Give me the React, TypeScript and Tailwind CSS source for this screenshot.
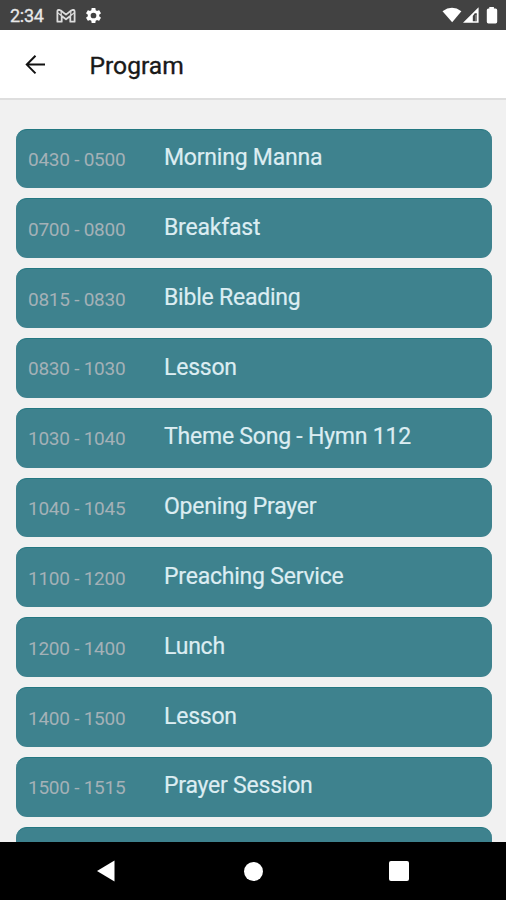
import React from "react";

type Item = { time: string; title: string };

const items: Item[] = [
  { time: "0430 - 0500", title: "Morning Manna" },
  { time: "0700 - 0800", title: "Breakfast" },
  { time: "0815 - 0830", title: "Bible Reading" },
  { time: "0830 - 1030", title: "Lesson" },
  { time: "1030 - 1040", title: "Theme Song - Hymn 112" },
  { time: "1040 - 1045", title: "Opening Prayer" },
  { time: "1100 - 1200", title: "Preaching Service" },
  { time: "1200 - 1400", title: "Lunch" },
  { time: "1400 - 1500", title: "Lesson" },
  { time: "1500 - 1515", title: "Prayer Session" },
  { time: "", title: "" },
];

function StatusBar() {
  return (
    <div className="flex h-[30px] shrink-0 items-center bg-[#424242] pt-px pl-[10px] text-white">
      <span className="w-[46px] pt-px text-[18px] leading-none tracking-[-0.3px] whitespace-nowrap text-[#e8e8e8] [-webkit-text-stroke:0.3px_#e8e8e8]">2:34</span>
      <svg className="h-[14px] w-[20px]" viewBox="0 0 20 14" fill="none" stroke="#dcdcdc" strokeWidth="1.8" strokeLinejoin="round">
        <path d="M1.4 2.5Q1.4 .8 3 .8L4.8 1.5 10 5.6 15.2 1.5 17 .8Q18.6.8 18.6 2.5V12.7H14.3V7L10 10.3 5.7 7V12.7H1.4Z" />
        <path d="M1.6 3.6 5.7 7M18.4 3.6 14.3 7M5.2 2V6.5M14.8 2V6.5" strokeWidth="1.2" />
      </svg>
      <svg className="ml-[8px] h-[19px] w-[19px]" viewBox="0 0 24 24" fill="#fff">
        <path d="M19.14 12.94c.04-.3.06-.61.06-.94 0-.32-.02-.64-.07-.94l2.03-1.58c.18-.14.23-.41.12-.61l-1.92-3.32c-.12-.22-.37-.29-.59-.22l-2.39.96c-.5-.38-1.03-.7-1.62-.94l-.36-2.54c-.04-.24-.24-.41-.48-.41h-3.84c-.24 0-.43.17-.47.41l-.36 2.54c-.59.24-1.13.57-1.62.94l-2.39-.96c-.22-.08-.47 0-.59.22L2.74 8.87c-.12.21-.08.47.12.61l2.03 1.58c-.05.3-.09.63-.09.94s.02.64.07.94l-2.03 1.58c-.18.14-.23.41-.12.61l1.92 3.32c.12.22.37.29.59.22l2.39-.96c.5.38 1.03.7 1.62.94l.36 2.54c.05.24.24.41.48.41h3.84c.24 0 .44-.17.47-.41l.36-2.54c.59-.24 1.13-.56 1.62-.94l2.39.96c.22.08.47 0 .59-.22l1.92-3.32c.12-.22.07-.47-.12-.61l-2.01-1.58zM12 15.6A3.6 3.6 0 1 1 12 8.4a3.6 3.6 0 0 1 0 7.2z" />
      </svg>
      <svg className="mr-[7px] ml-auto h-[18px] w-[57px]" viewBox="0 0 57 18" fill="#fff">
        <path d="M.5 4.200Q10 -2.500 19.400 4.200L10.200 15.300Z" />
        <path fillRule="evenodd" d="M36.600 .200V15.700H21ZM32.800 6.300H34.800V14.200H30.800V9Z" />
        <path d="M33.200 8H34.500V14H33.200Z" fill="#fff" fillOpacity=".35" />
        <path d="M47.300 0H51.900V1.600H53.600Q55.200 1.600 55.200 3.200V14.800Q55.200 16.400 53.600 16.400H46.400Q44.800 16.400 44.800 14.800V3.200Q44.800 1.600 46.400 1.600H47.300Z" />
      </svg>
    </div>
  );
}

function Header() {
  return (
    <header className="flex h-[70px] shrink-0 items-center border-b-2 border-[#dedede] bg-white pl-[25px]">
      <svg className="mt-px h-[20px] w-[20px]" viewBox="0 0 20 20" fill="none" stroke="#111" strokeWidth="2" strokeLinejoin="miter">
        <path d="M10.500 .800 1.800 9.600 10.500 18.400M1.800 9.600H20" />
      </svg>
      <h1 className="ml-[44.5px] pt-[5px] text-[24.6px] leading-none text-[#191919] [-webkit-text-stroke:0.35px_#191919]">Program</h1>
    </header>
  );
}

function Card({ time, title }: Item) {
  return (
    <li className="flex h-[59.8px] shrink-0 rounded-[11px] border-t border-[#247781] bg-[#3e828e] pl-[12.5px]">
      <span className="w-[136px] shrink-0 pt-[19.5px] text-[19px] leading-[22px] tracking-[-0.25px] text-[#a4b1b7]">{time}</span>
      <span className="pt-[15.6px] text-[23px] leading-[26px] tracking-[-0.22px] whitespace-nowrap text-[#dcedf2] [-webkit-text-stroke:0.2px_#dcedf2]">{title}</span>
    </li>
  );
}

function NavigationBar() {
  return (
    <nav className="flex h-[58px] shrink-0 items-center bg-black pl-[96px]">
      <svg className="h-[22px] w-[19px]" viewBox="0 0 19 22" fill="#fff">
        <path d="M1 11 18.500 .500V21.500Z" />
      </svg>
      <span className="ml-[129px] h-[19px] w-[19px] rounded-full bg-white" />
      <span className="ml-[126px] h-[20px] w-[20px] rounded-[2px] bg-white" />
    </nav>
  );
}

export default function App() {
  return (
    <div className="flex h-[900px] w-[506px] flex-col overflow-hidden bg-[#f1f1f1] font-['Roboto',sans-serif]">
      <StatusBar />
      <Header />
      <main className="min-h-0 flex-1 overflow-hidden pt-[28.5px] pr-[14px] pl-[15.5px]">
        <ul className="flex flex-col gap-[10.02px]">
          {items.map((item, i) => (
            <Card key={i} {...item} />
          ))}
        </ul>
      </main>
      <NavigationBar />
    </div>
  );
}
